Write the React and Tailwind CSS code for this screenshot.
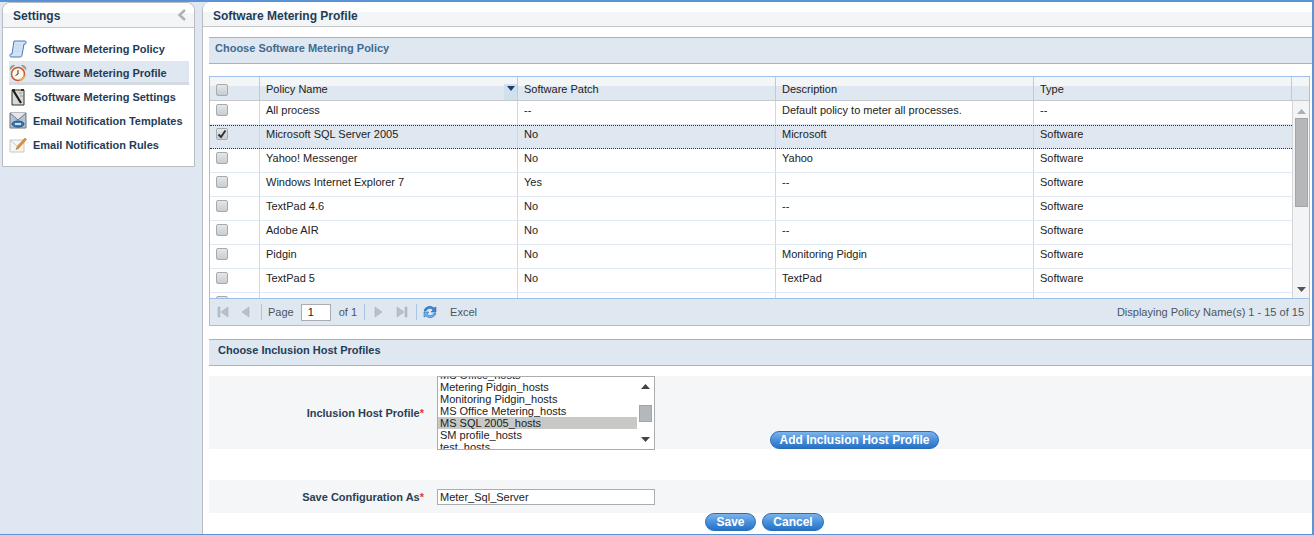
import React from 'react';

const policies = [
    { name: 'All process', patch: '--', desc: 'Default policy to meter all processes.', type: '--' },
    { name: 'Microsoft SQL Server 2005', patch: 'No', desc: 'Microsoft', type: 'Software', selected: true },
    { name: 'Yahoo! Messenger', patch: 'No', desc: 'Yahoo', type: 'Software' },
    { name: 'Windows Internet Explorer 7', patch: 'Yes', desc: '--', type: 'Software' },
    { name: 'TextPad 4.6', patch: 'No', desc: '--', type: 'Software' },
    { name: 'Adobe AIR', patch: 'No', desc: '--', type: 'Software' },
    { name: 'Pidgin', patch: 'No', desc: 'Monitoring Pidgin', type: 'Software' },
    { name: 'TextPad 5', patch: 'No', desc: 'TextPad', type: 'Software' },
];

const hosts = ['MS Office_hosts', 'Metering Pidgin_hosts', 'Monitoring Pidgin_hosts', 'MS Office Metering_hosts', 'MS SQL 2005_hosts', 'SM profile_hosts', 'test_hosts'];

const PolicyIcon = () => (
    <svg width="18" height="18" viewBox="0 0 18 18">
        <path d="M5 1h11c1.500 0 1.500 3 0 3h-1l-2 11c-.3 2-1 2-2 2H2c-1.500 0-1.500-3 0-3h1z" fill="#d3e3f6" stroke="#4a78b5" />
        <path d="M6 5h6M5.500 8h6M5 11h6" stroke="#bcd2ea" />
    </svg>
);

const ClockIcon = () => (
    <svg width="18" height="18" viewBox="0 0 18 18">
        <path d="M1 5.500C1 2.500 3 1 5.500 1.500zM17 5.500C17 2.500 15 1 12.500 1.500z" fill="#b8a27c" stroke="#7d6a48" strokeWidth="0.500" />
        <circle cx="9" cy="10" r="6.500" fill="#fdf8ea" stroke="#c8553d" strokeWidth="1.500" />
        <path d="M9 6v4l-2.500 1.500" stroke="#333" fill="none" />
        <path d="m10 16 6-5 1 1-5 5.500z" fill="#e8b04a" />
    </svg>
);

const SettingsIcon = () => (
    <svg width="18" height="18" viewBox="0 0 18 18">
        <path d="M3 2h12v15H3z" fill="#d9d9d4" stroke="#333" />
        <path d="M3 1h3v2H3zM12 1h3v2h-3z" fill="#333" />
        <path d="m4 2 8 13" stroke="#1c1c1c" strokeWidth="2.200" />
        <path d="M10 5h3M11 8h3" stroke="#999" />
    </svg>
);

const TemplateIcon = () => (
    <svg width="18" height="18" viewBox="0 0 18 18">
        <path d="M1 1h16v15H1z" fill="#b9c2cc" stroke="#6b7580" />
        <path d="m1 1 8 7 8-7" fill="#e3e7ec" stroke="#6b7580" />
        <ellipse cx="9" cy="12" rx="6" ry="3" fill="#2f7fc1" stroke="#1d4f7a" />
        <path d="M6 12h6" stroke="#fff" strokeWidth="1.500" />
    </svg>
);

const RulesIcon = () => (
    <svg width="18" height="18" viewBox="0 0 18 18">
        <path d="M1 4h14v12H1z" fill="#f6f6f2" stroke="#c3c7c9" />
        <path d="m1 4 7 6 7-6" fill="none" stroke="#c3c7c9" />
        <path d="m8 11 8-9 1.500 1.500-8 9-2.500 1z" fill="#e8912d" stroke="#b5651d" strokeWidth="0.500" />
    </svg>
);

const menu = [
    { label: 'Software Metering Policy', icon: PolicyIcon, left: 'w-[25px]' },
    { label: 'Software Metering Profile', icon: ClockIcon, left: 'w-[25px]', active: true },
    { label: 'Software Metering Settings', icon: SettingsIcon, left: 'w-[25px]' },
    { label: 'Email Notification Templates', icon: TemplateIcon, left: 'w-[24px]' },
    { label: 'Email Notification Rules', icon: RulesIcon, left: 'w-[24px]' },
];

const Checkbox = ({ checked }) => (
    <span className="w-[12px] h-[12px] rounded-[2px] border border-[#a7aaad] bg-gradient-to-b from-[#e4e6e8] to-[#c9ccd0] flex items-center justify-center">
        {checked && (
            <svg width="10" height="10" viewBox="0 0 10 10">
                <path d="M1.500 5.500 4 8l4.500-6.500" fill="none" stroke="#333" strokeWidth="2" />
            </svg>
        )}
    </span>
);

const PagerIcon = ({ d, className }) => (
    <svg width="14" height="14" viewBox="0 0 14 14" className={`shrink-0 ${className || ''}`}>
        <path d={d} fill="#b8c0c8" stroke="#a3acb5" strokeWidth="0.500" />
    </svg>
);

const PagerSep = ({ className }) => <span className={`w-px h-[16px] bg-[#a9c4e4] ${className}`} />;

const PillButton = ({ children, className }) => (
    <button className={`h-[18px] rounded-full border border-[#2a6db5] bg-gradient-to-b from-[#7db4ea] via-[#4a90dc] to-[#2472c8] text-white font-bold text-[12px] leading-none flex items-center justify-center ${className}`}>
        {children}
    </button>
);

const SectionBar = ({ children, className }) => (
    <div className={`h-[27px] bg-[#dfe7f0] border-t border-b border-[#9db5d0] font-bold text-[11px] flex items-start pt-[2px] ${className}`}>
        {children}
    </div>
);

const App = () => {
    return (
        <div className="w-[1314px] h-[535px] overflow-hidden bg-[#dfe8f2] border-t-2 border-t-[#5b94d6] border-r-2 border-r-[#5b94d6] border-b border-b-[#5b94d6] flex text-[11px] text-[#222] font-['Liberation_Sans',Arial,sans-serif]">
            {/* Sidebar */}
            <div className="w-[193px] ml-[2px] h-[165px] bg-white border border-[#b9bdc0] rounded-t-[8px] shrink-0">
                <div className="h-[25px] pt-[2px] border-b border-[#c3c7ca] bg-gradient-to-b from-white from-40% to-[#f3f5f7] to-40% rounded-t-[8px] flex items-center justify-between pl-[10px] pr-[7px]">
                    <span className="font-bold text-[12px] text-[#1f3d57]">Settings</span>
                    <svg width="10" height="12" viewBox="0 0 10 12" className="-mt-[2px]">
                        <path d="M8 1 2.500 6 8 11" fill="none" stroke="#aeb2b6" strokeWidth="2.500" />
                    </svg>
                </div>
                <div className="pt-[9px] px-[6px]">
                    {menu.map((item) => {
                        const Icon = item.icon;
                        return (
                            <div key={item.label} className={`h-[24px] flex items-center font-bold text-[11px] text-[#1f3d57] w-[180px] ${item.active ? 'bg-[#dfe7f0] shadow-[inset_0_-3px_0_#d3dae2]' : ''}`}>
                                <span className={`${item.left} shrink-0`}><Icon /></span>
                                <span className="whitespace-nowrap">{item.label}</span>
                            </div>
                        );
                    })}
                </div>
            </div>

            {/* Main panel */}
            <div className="ml-[7px] flex-1 bg-white border-l border-[#b9bdc0] rounded-tl-[8px] flex flex-col">
                <div className="h-[25px] shrink-0 pt-[4px] border-b border-[#c3c7ca] bg-gradient-to-b from-white from-40% to-[#f3f5f7] to-40% rounded-tl-[8px] flex items-center pl-[10px] font-bold text-[12px] text-[#1f3d57]">
                    Software Metering Profile
                </div>

                <div className="pl-[6px] pt-[10px] flex-1 flex flex-col">
                    <SectionBar className="pl-[6px] text-[#3f6b91]">Choose Software Metering Policy</SectionBar>

                    {/* Grid */}
                    <div className="mt-[12px] w-[1101px] h-[250px] border border-[#9fc0e8] flex flex-col">
                        <div className="h-[24px] shrink-0 flex border-b border-[#c6c9cc] bg-gradient-to-b from-[#f3f5f7] from-40% to-[#dfe7f0] to-40%">
                            <div className="w-[50px] flex items-center pl-[6px] pt-[2px] border-r border-[#c6c9cc]"><Checkbox /></div>
                            <div className="w-[258px] border-r border-[#c6c9cc] flex items-center pl-[6px] pt-[2px] relative">
                                Policy Name
                                <span className="absolute right-0 top-[7px] bottom-0 w-[13px] bg-[#cfe0ef] flex items-center justify-center">
                                    <svg width="8" height="5" viewBox="0 0 8 5" className="-mt-[7px]"><path d="M0 0h8L4 5z" fill="#1f3d6b" /></svg>
                                </span>
                            </div>
                            <div className="w-[258px] border-r border-[#c6c9cc] flex items-center pl-[6px] pt-[2px]">Software Patch</div>
                            <div className="w-[258px] border-r border-[#c6c9cc] flex items-center pl-[6px] pt-[2px]">Description</div>
                            <div className="w-[258px] border-r border-[#c6c9cc] flex items-center pl-[6px] pt-[2px]">Type</div>
                        </div>
                        <div className="flex-1 flex min-h-0">
                            <div className="w-[1082px] overflow-hidden">
                                {policies.map((p) => (
                                    <div key={p.name} className={`h-[24px] flex ${p.selected ? 'bg-[#dfe7f0] border-t border-b border-dotted border-[#333]' : 'border-b border-[#e0e8f2]'}`}>
                                        <div className={`w-[50px] flex items-start pl-[6px] border-r border-[#d4d6d8] ${p.selected ? 'pt-[2px]' : 'pt-[3px]'}`}><Checkbox checked={p.selected} /></div>
                                        <div className={`w-[258px] border-r border-[#d4d6d8] pl-[6px] ${p.selected ? 'pt-0' : 'pt-[1px]'}`}>{p.name}</div>
                                        <div className={`w-[258px] border-r border-[#d4d6d8] pl-[6px] ${p.selected ? 'pt-0' : 'pt-[1px]'}`}>{p.patch}</div>
                                        <div className={`w-[258px] border-r border-[#d4d6d8] pl-[6px] ${p.selected ? 'pt-0' : 'pt-[1px]'}`}>{p.desc}</div>
                                        <div className={`w-[258px] pl-[6px] ${p.selected ? 'pt-0' : 'pt-[1px]'}`}>{p.type}</div>
                                    </div>
                                ))}
                                <div className="h-[24px] flex">
                                    <div className="w-[50px] pl-[6px] pt-[3px] border-r border-[#d4d6d8]"><Checkbox /></div>
                                    <div className="w-[258px] border-r border-[#d4d6d8]" />
                                    <div className="w-[258px] border-r border-[#d4d6d8]" />
                                    <div className="w-[258px] border-r border-[#d4d6d8]" />
                                </div>
                            </div>
                            <div className="w-[17px] bg-[#f3f4f5] border-l border-[#d4d6d8] flex flex-col items-center pt-[8px] pb-[6px]">
                                <svg width="9" height="5" viewBox="0 0 9 5"><path d="M0 5h9L4.500 0z" fill="#aab0b5" /></svg>
                                <span className="mt-[4px] w-[13px] h-[89px] bg-[#b5b8ba] border border-[#a3a6a8]" />
                                <span className="flex-1" />
                                <svg width="9" height="5" viewBox="0 0 9 5"><path d="M0 0h9L4.500 5z" fill="#555" /></svg>
                            </div>
                        </div>
                        <div className="h-[27px] shrink-0 bg-[#dfe7f0] border-t border-[#9fc0e8] flex items-center pl-[6px] pr-[5px] text-[#4a5563]">
                            <PagerIcon d="M2 2h2v10H2zM12 2v10L5 7z" />
                            <PagerIcon d="M10 2v10L3 7z" className="ml-[9px]" />
                            <PagerSep className="ml-[8px]" />
                            <span className="ml-[6px]">Page</span>
                            <span className="ml-[7px] w-[30px] h-[17px] bg-white border border-[#a9adb0] pl-[6px] text-[#222] leading-[15px]">1</span>
                            <span className="ml-[8px]">of 1</span>
                            <PagerSep className="ml-[7px]" />
                            <PagerIcon d="M4 2v10l7-5z" className="ml-[6px]" />
                            <PagerIcon d="M2 2v10l7-5zM10 2h2v10h-2z" className="ml-[10px]" />
                            <PagerSep className="ml-[7px]" />
                            <svg width="16" height="16" viewBox="0 0 16 16" className="ml-[5px]">
                                <path d="M2 7a6 6 0 0 1 10-3l2-1v5H9l2-2a4 4 0 0 0-7 1z" fill="#3b8ad9" stroke="#1c5fa8" strokeWidth="0.500" />
                                <path d="M14 9a6 6 0 0 1-10 3l-2 1V8h5l-2 2a4 4 0 0 0 7-1z" fill="#6fb2ee" stroke="#1c5fa8" strokeWidth="0.500" />
                            </svg>
                            <span className="ml-[12px]">Excel</span>
                            <span className="ml-auto">Displaying Policy Name(s) 1 - 15 of 15</span>
                        </div>
                    </div>

                    <SectionBar className="mt-[13px] pl-[9px] text-[#1f3d57]">Choose Inclusion Host Profiles</SectionBar>

                    {/* Inclusion host profile */}
                    <div className="mt-[10px] h-[73px] bg-[#f4f6f8] flex relative">
                        <div className="w-[215px] text-right font-bold text-[#2b3f52] pt-[31px] leading-[13px]">Inclusion Host Profile<span className="text-[#e53935]">*</span></div>
                        <div className="ml-[13px] w-[218px] h-[74px] bg-white border border-[#a9adb0] flex overflow-hidden">
                            <div className="flex-1 overflow-hidden pt-[1px]">
                                <div className="-mt-[9px]">
                                    {hosts.map((h) => (
                                        <div key={h} className={`h-[12px] pl-[2px] leading-[12px] ${h === 'MS SQL 2005_hosts' ? 'bg-[#c8c9c6]' : ''}`}>{h}</div>
                                    ))}
                                </div>
                            </div>
                            <div className="w-[17px] flex flex-col items-center py-[7px]">
                                <svg width="9" height="5" viewBox="0 0 9 5"><path d="M0 5h9L4.500 0z" fill="#444" /></svg>
                                <span className="mt-[16px] w-[13px] h-[17px] bg-[#b5b8ba] border border-[#a3a6a8]" />
                                <span className="flex-1" />
                                <svg width="9" height="5" viewBox="0 0 9 5"><path d="M0 0h9L4.500 5z" fill="#444" /></svg>
                            </div>
                        </div>
                        <PillButton className="absolute left-[561px] top-[55px] w-[169px]">Add Inclusion Host Profile</PillButton>
                    </div>

                    {/* Save configuration */}
                    <div className="mt-[31px] h-[33px] bg-[#f4f6f8] flex items-center">
                        <div className="w-[215px] pt-[2px] text-right font-bold text-[#2b3f52]">Save Configuration As<span className="text-[#e53935]">*</span></div>
                        <div className="ml-[13px] w-[218px] h-[16px] bg-white border border-[#a9adb0] pl-[2px] leading-[14px] text-[#222]">Meter_Sql_Server</div>
                    </div>

                    <div className="flex gap-[6px] ml-[496px]">
                        <PillButton className="w-[51px]">Save</PillButton>
                        <PillButton className="w-[62px]">Cancel</PillButton>
                    </div>
                </div>
            </div>
        </div>
    );
};

export default App;
